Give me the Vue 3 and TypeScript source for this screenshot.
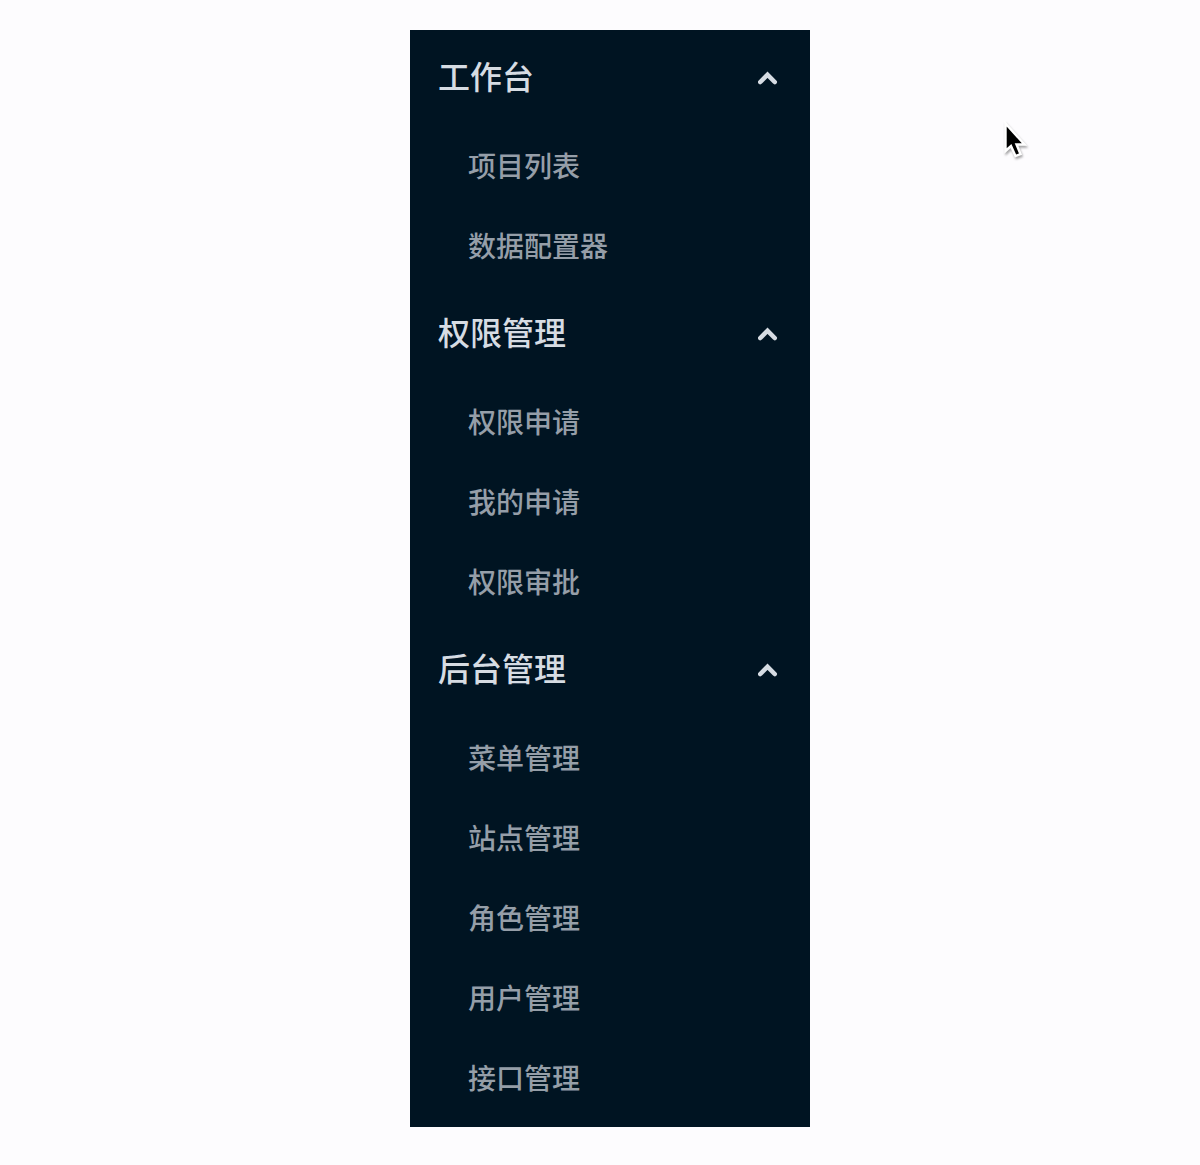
<script setup lang="ts">
import { ref } from 'vue'

interface MenuGroup {
  title: string
  items: string[]
  open: boolean
}

const groups = ref<MenuGroup[]>([
  { title: '工作台', items: ['项目列表', '数据配置器'], open: true },
  { title: '权限管理', items: ['权限申请', '我的申请', '权限审批'], open: true },
  { title: '后台管理', items: ['菜单管理', '站点管理', '角色管理', '用户管理', '接口管理'], open: true },
])
</script>

<template>
  <main class="page">
    <nav class="menu" aria-label="主菜单">
      <section v-for="group in groups" :key="group.title">
        <button class="title" type="button" :aria-expanded="group.open" @click="group.open = !group.open">
          <span class="label">{{ group.title }}</span>
          <svg class="arrow" :class="{ closed: !group.open }" width="20" height="14" viewBox="0 0 20 14" aria-hidden="true">
            <path d="M2.300 11 9.500 3.700 16.700 11" fill="none" stroke="currentColor" stroke-width="4.600" stroke-linecap="round" />
          </svg>
        </button>
        <ul v-show="group.open" class="list">
          <li v-for="item in group.items" :key="item">
            <a class="item" href="#">{{ item }}</a>
          </li>
        </ul>
      </section>
    </nav>
    <svg class="cursor" width="28" height="42" viewBox="0 0 28 42" aria-hidden="true">
      <path d="M3.500 2.500V30L9 25L13.500 35L18.500 33L14.500 23.500H22.500Z" fill="#000" stroke="#fff" stroke-width="2.400" />
    </svg>
  </main>
</template>

<style>
body {
  margin: 0;
  background: #fdfcfe;
}
</style>

<style scoped>
.page {
  position: relative;
  box-sizing: border-box;
  min-height: 100vh;
  padding: 30px 0 38px 20px;
  font-family: "Noto Sans CJK SC", sans-serif;
}
.menu {
  width: 400px;
  margin: 0 auto;
  padding-bottom: 9px;
  background: #001422;
}
.title {
  display: flex;
  align-items: center;
  justify-content: space-between;
  box-sizing: border-box;
  width: 100%;
  height: 96px;
  padding: 0 32px 0 28px;
  border: 0;
  background: none;
  color: #d6dce3;
  font: inherit;
  font-size: 32px;
  font-weight: 500;
  line-height: 48px;
  cursor: pointer;
}
.label {
  padding-bottom: 6px;
}
.arrow.closed {
  transform: rotate(180deg);
}
.list {
  margin: 0;
  padding: 0;
  list-style: none;
}
.item {
  display: block;
  padding: 0 58px 2px;
  color: #959ea8;
  font-size: 28px;
  font-weight: 500;
  line-height: 78px;
  text-decoration: none;
}
.cursor {
  position: absolute;
  top: 121px;
  left: 1002px;
  filter: drop-shadow(1px 2px 1px rgba(0, 0, 0, 0.35));
}
</style>
